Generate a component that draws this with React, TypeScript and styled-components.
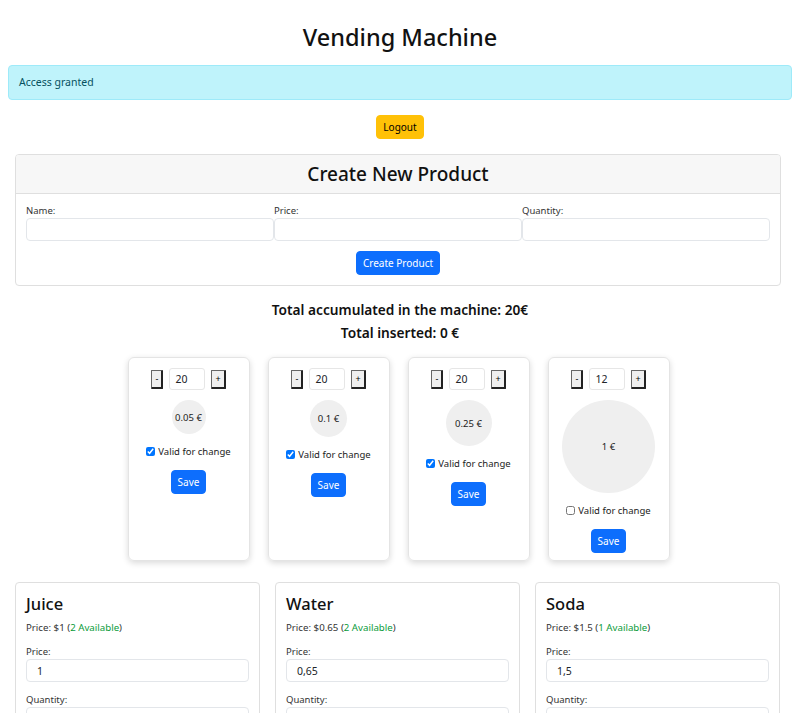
import React from 'react';
import styled, { createGlobalStyle } from 'styled-components';

const GlobalStyle = createGlobalStyle`
  body {
    margin: 8px;
    font-family: "Noto Sans", "Liberation Sans", sans-serif;
    color: #212529;
    background: #fff;
  }
  * { box-sizing: border-box; }
`;

const Title = styled.h1`
  margin: 13px 0 12px;
  font-size: 23.5px;
  line-height: 32px;
  font-weight: 500;
  text-align: center;
  color: #111;
`;

const Alert = styled.div`
  padding: 10px 10px;
  font-size: 10.5px;
  line-height: 13px;
  color: #055160;
  background: #bff3fb;
  border: 1px solid #9eeaf9;
  border-radius: 4px;
  margin-bottom: 15px;
`;

const Center = styled.div`
  display: flex;
  justify-content: center;
`;

const Button = styled.button<{ $variant?: 'primary' | 'warning' }>`
  font-family: inherit;
  font-size: 10px;
  line-height: 12px;
  padding: 5px 6px;
  border-radius: 4px;
  border: 1px solid ${p => (p.$variant === 'warning' ? '#ffc107' : '#0d6efd')};
  background: ${p => (p.$variant === 'warning' ? '#ffc107' : '#0d6efd')};
  color: ${p => (p.$variant === 'warning' ? '#000' : '#fff')};
`;

const CreateCard = styled.section`
  margin: 15px 11px 0 7px;
  border: 1px solid #dfdfdf;
  border-radius: 4px;
  overflow: hidden;
`;

const CardHeader = styled.div`
  height: 39px;
  background: #f7f7f7;
  border-bottom: 1px solid #dfdfdf;
  display: flex;
  align-items: center;
  justify-content: center;
`;

const HeaderTitle = styled.h2`
  margin: 0;
  font-size: 19px;
  font-weight: 500;
  color: #111;
`;

const CreateBody = styled.div`
  padding: 10px;
`;

const FieldsRow = styled.div`
  display: grid;
  grid-template-columns: repeat(3, 1fr);
  margin-bottom: 10px;
`;

const Field = styled.label`
  display: flex;
  flex-direction: column;
`;

const Label = styled.span`
  font-size: 9.5px;
  line-height: 14px;
  color: #333;
`;

const TextInput = styled.input`
  height: 23px;
  width: 100%;
  font-family: inherit;
  font-size: 10.5px;
  padding: 0 10px;
  border: 1px solid #e3e6ea;
  border-radius: 4px;
  color: #212529;
  background: #fff;
`;

const Totals = styled.div`
  margin-top: 12px;
  text-align: center;
`;

const TotalLine = styled.div`
  font-size: 13.7px;
  line-height: 23px;
  font-weight: 600;
  color: #111;
`;

const CoinRow = styled.div`
  display: flex;
  justify-content: center;
  gap: 18px;
  margin: 13px 3px 0 0;
`;

const CoinCard = styled.div`
  width: 122px;
  height: 204px;
  padding: 10px 0;
  border: 1px solid #e4e4e4;
  border-radius: 6px;
  box-shadow: 0 2px 6px rgba(0, 0, 0, 0.15);
  display: flex;
  flex-direction: column;
  align-items: center;
`;

const Stepper = styled.div`
  display: flex;
  align-items: center;
  gap: 6px;
`;

const StepButton = styled.button`
  font-family: inherit;
  font-size: 9px;
  line-height: 15px;
  height: 19px;
  padding: 0 3px;
  background: #efefef;
  color: #000;
  border: 1px solid #555;
  border-right-width: 2px;
  border-bottom-width: 2px;
  border-color: #666 #222 #222 #666;
  border-radius: 1px;
`;

const CountInput = styled.input`
  width: 36px;
  height: 22px;
  font-family: inherit;
  font-size: 10.5px;
  padding: 0 5px;
  border: 1px solid #e6e6e6;
  border-radius: 3px;
  color: #212529;
`;

const Coin = styled.div<{ $size: number }>`
  width: ${p => p.$size}px;
  height: ${p => p.$size}px;
  flex-shrink: 0;
  margin-top: 10px;
  border-radius: 50%;
  background: #efefef;
  display: flex;
  align-items: center;
  justify-content: center;
  font-size: 9.5px;
  color: #222;
`;

const CheckRow = styled.label`
  display: flex;
  align-items: center;
  gap: 3px;
  margin-top: 11px;
  font-size: 9.5px;
  line-height: 13px;
  color: #222;
  input {
    margin: 0;
    width: 9px;
    height: 9px;
  }
`;

const SaveWrap = styled.div`
  margin-top: 11px;
`;

const ProductGrid = styled.div`
  display: grid;
  grid-template-columns: repeat(3, 245px);
  gap: 15px;
  margin: 21px 0 0 7px;
`;

const ProductCard = styled.div`
  border: 1px solid #dfdfdf;
  border-radius: 4px;
  padding: 10px 10px;
  height: 160px;
`;

const ProductName = styled.h3`
  margin: 0;
  font-size: 16.5px;
  line-height: 22px;
  font-weight: 500;
  color: #111;
`;

const PriceLine = styled.p`
  margin: 6px 0 10px;
  font-size: 9.7px;
  line-height: 14px;
  color: #333;
`;

const Available = styled.span`
  color: #0a9b3a;
`;

const ProductField = styled.label`
  display: flex;
  flex-direction: column;
  margin-bottom: 11px;
`;

const coins = [
  { value: '0.05 €', count: 20, size: 34, valid: true },
  { value: '0.1 €', count: 20, size: 37, valid: true },
  { value: '0.25 €', count: 20, size: 46, valid: true },
  { value: '1 €', count: 12, size: 93, valid: false },
];

const products = [
  { name: 'Juice', price: '$1', available: 2, input: '1' },
  { name: 'Water', price: '$0.65', available: 2, input: '0,65' },
  { name: 'Soda', price: '$1.5', available: 1, input: '1,5' },
];

export default function App() {
  return (
    <>
      <GlobalStyle />
      <Title>Vending Machine</Title>
      <Alert>Access granted</Alert>
      <Center>
        <Button $variant="warning">Logout</Button>
      </Center>

      <CreateCard>
        <CardHeader>
          <HeaderTitle>Create New Product</HeaderTitle>
        </CardHeader>
        <CreateBody>
          <FieldsRow>
            <Field>
              <Label>Name:</Label>
              <TextInput />
            </Field>
            <Field>
              <Label>Price:</Label>
              <TextInput />
            </Field>
            <Field>
              <Label>Quantity:</Label>
              <TextInput />
            </Field>
          </FieldsRow>
          <Center>
            <Button>Create Product</Button>
          </Center>
        </CreateBody>
      </CreateCard>

      <Totals>
        <TotalLine>Total accumulated in the machine: 20€</TotalLine>
        <TotalLine>Total inserted: 0 €</TotalLine>
      </Totals>

      <CoinRow>
        {coins.map(c => (
          <CoinCard key={c.value}>
            <Stepper>
              <StepButton>-</StepButton>
              <CountInput defaultValue={c.count} />
              <StepButton>+</StepButton>
            </Stepper>
            <Coin $size={c.size}>{c.value}</Coin>
            <CheckRow>
              <input type="checkbox" defaultChecked={c.valid} />
              Valid for change
            </CheckRow>
            <SaveWrap>
              <Button>Save</Button>
            </SaveWrap>
          </CoinCard>
        ))}
      </CoinRow>

      <ProductGrid>
        {products.map(p => (
          <ProductCard key={p.name}>
            <ProductName>{p.name}</ProductName>
            <PriceLine>
              Price: {p.price} (<Available>{p.available} Available</Available>)
            </PriceLine>
            <ProductField>
              <Label>Price:</Label>
              <TextInput defaultValue={p.input} />
            </ProductField>
            <ProductField>
              <Label>Quantity:</Label>
              <TextInput />
            </ProductField>
          </ProductCard>
        ))}
      </ProductGrid>
    </>
  );
}
